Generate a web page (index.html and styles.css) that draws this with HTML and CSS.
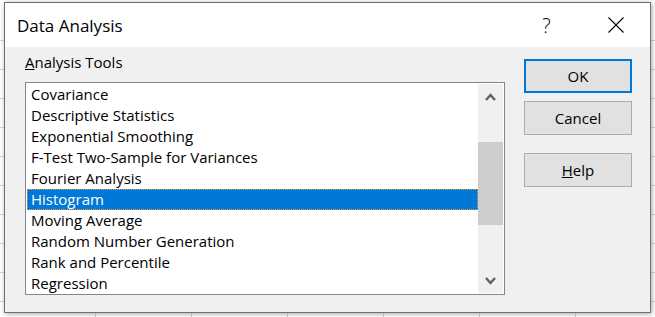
FILE: index.html
```html
<!DOCTYPE html>
<html lang="en">
  <head>
    <meta charset="UTF-8" />
    <title>Data Analysis</title>
    <link rel="stylesheet" href="styles.css">
  </head>

  <body>
    <div class="dialog">
      <div class="titlebar">
        <span class="title">Data Analysis</span>
        <span class="cap-btn">?</span>
        <span class="cap-btn">
          <svg width="16" height="16" viewBox="0 0 16 16">
            <path d="M0.5 0.5 L15.5 15.5 M15.5 0.5 L0.5 15.5" stroke="#000" stroke-width="1.1" fill="none" />
          </svg>
        </span>
      </div>

      <div class="content">
        <div class="left">
          <div class="label"><u>A</u>nalysis Tools</div>
          <div class="listbox">
            <ul class="items">
              <li>Covariance</li>
              <li>Descriptive Statistics</li>
              <li>Exponential Smoothing</li>
              <li>F-Test Two-Sample for Variances</li>
              <li>Fourier Analysis</li>
              <li class="selected">Histogram</li>
              <li>Moving Average</li>
              <li>Random Number Generation</li>
              <li>Rank and Percentile</li>
              <li>Regression</li>
            </ul>
            <div class="scrollbar">
              <div class="arrow">
                <svg width="11" height="8" viewBox="0 0 11 8">
                  <polyline points="1,7 5.5,2 10,7" stroke="#606060" stroke-width="2.4" fill="none" />
                </svg>
              </div>
              <div class="track">
                <div class="thumb"></div>
              </div>
              <div class="arrow">
                <svg width="11" height="8" viewBox="0 0 11 8">
                  <polyline points="1,1 5.5,6 10,1" stroke="#606060" stroke-width="2.4" fill="none" />
                </svg>
              </div>
            </div>
          </div>
        </div>

        <div class="buttons">
          <button class="btn default">OK</button>
          <button class="btn">Cancel</button>
          <button class="btn help"><u>H</u>elp</button>
        </div>
      </div>
    </div>
  </body>
</html>
```

FILE: styles.css
```css
body {
  margin: 0;
  height: 317px;
  overflow: hidden;
  font-family: "Open Sans", "Noto Sans", sans-serif;
  background-color: #fff;
  background-image:
    linear-gradient(#fff, #fff),
    linear-gradient(#d4d4d4 1px, transparent 1px),
    linear-gradient(90deg, #d4d4d4 1px, transparent 1px);
  background-size: 100% 40px, 96px 29px, 96px 29px;
  background-position: 0 0, 0 40px, 95px 40px;
  background-repeat: no-repeat, repeat, repeat;
}

.dialog {
  box-sizing: border-box;
  width: 647px;
  height: 311px;
  margin: 2px 0 0 4px;
  border: 1px solid #6f6f6f;
  background-color: #f0f0f0;
  box-shadow: 1px 1px 5px rgba(0, 0, 0, 0.35);
  display: flex;
  flex-direction: column;
}

.titlebar {
  height: 44px;
  background-color: #fff;
  display: flex;
  align-items: center;
}

.title {
  flex: 1;
  padding-left: 12px;
  font-size: 17px;
  color: #000;
}

.cap-btn {
  width: 69px;
  height: 44px;
  display: flex;
  justify-content: center;
  align-items: center;
  font-size: 20px;
  font-weight: 300;
  color: #000;
}

.content {
  flex: 1;
  display: flex;
  padding: 0 18px 0 20px;
  gap: 19px;
}

.label {
  margin-top: 5px;
  height: 20px;
  line-height: 20px;
  font-size: 15px;
  color: #000;
}

.listbox {
  box-sizing: border-box;
  width: 480px;
  height: 213px;
  margin-top: 10px;
  padding: 1px;
  border: 1px solid #828790;
  background-color: #fff;
  display: flex;
  overflow: hidden;
}

.items {
  list-style: none;
  margin: 0;
  padding: 0;
  width: 451px;
}

.items li {
  box-sizing: border-box;
  height: 21px;
  line-height: 21px;
  padding-left: 4px;
  font-size: 15px;
  color: #000;
  white-space: nowrap;
}

.items .selected {
  background-color: #0078d7;
  color: #fff;
  border: 1px dotted #f39a3c;
  line-height: 19px;
  padding-left: 3px;
}

.scrollbar {
  width: 25px;
  height: 209px;
  background-color: #f0f0f0;
  display: flex;
  flex-direction: column;
}

.arrow {
  height: 25px;
  display: flex;
  justify-content: center;
  align-items: center;
}

.track {
  flex: 1;
  padding-top: 33px;
}

.thumb {
  height: 83px;
  background-color: #cdcdcd;
}

.buttons {
  display: flex;
  flex-direction: column;
  padding-top: 12px;
}

.btn {
  box-sizing: border-box;
  width: 108px;
  height: 34px;
  margin-bottom: 8px;
  border: 1px solid #adadad;
  background-color: #e1e1e1;
  font-family: "Open Sans", "Noto Sans", sans-serif;
  font-size: 15px;
  color: #000;
  padding: 0;
}

.default {
  border: 2px solid #0078d7;
}

.help {
  margin-top: 10px;
}
```
